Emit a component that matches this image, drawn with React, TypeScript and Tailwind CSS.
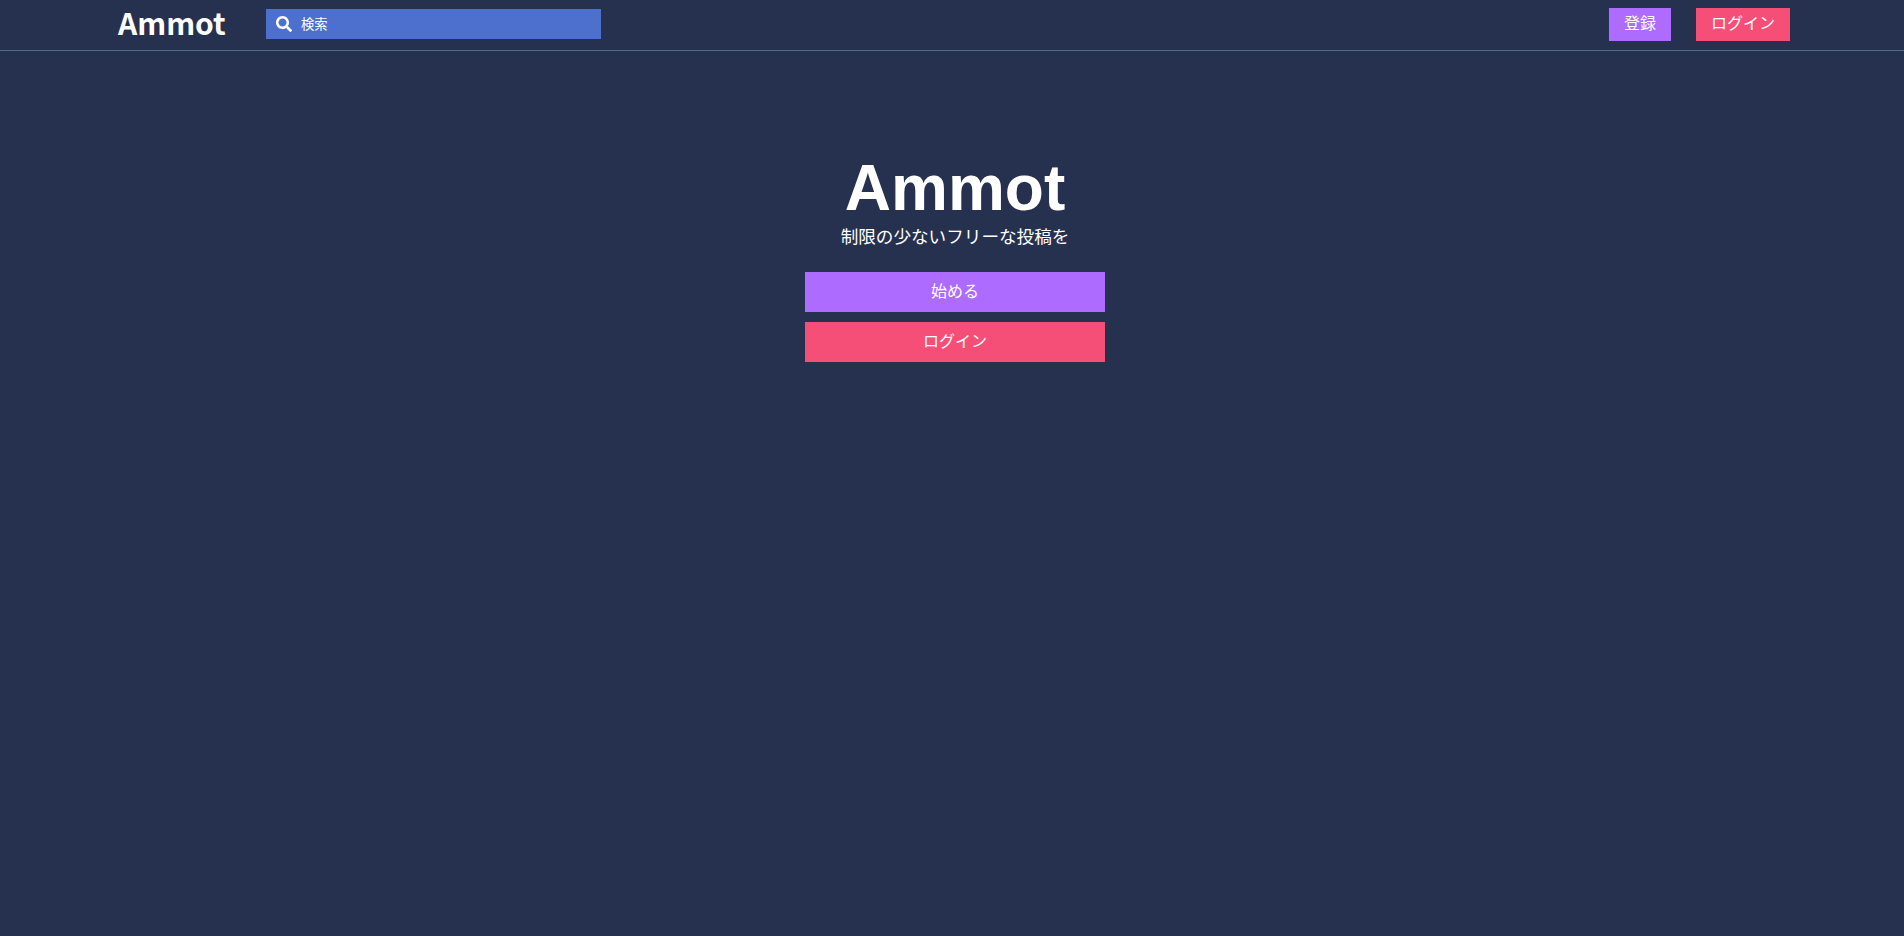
import { FaSearch } from "react-icons/fa";

const sans = "font-['Liberation_Sans','Noto_Sans_CJK_JP',sans-serif]";

export default function App() {
  return (
    <div className={`min-h-[936px] bg-[#263150] text-white ${sans}`}>
      <header className="flex h-[51px] items-center border-b border-[#56688f] pb-[2px] pl-[117px] pr-[114px]">
        <span className="mb-[4px] ml-[1px] w-[148px] font-['Noto_Sans_CJK_JP',sans-serif] text-[30px] font-bold leading-none">
          Ammot
        </span>
        <div className="flex h-[30px] w-[335px] items-center gap-[9px] bg-[#4d70ce] pl-[10px] text-[13.33px]">
          <FaSearch size={16} />
          <span className="pt-[1px]">検索</span>
        </div>
        <div className="ml-auto flex gap-[25px] text-base">
          <a className="flex h-[33px] w-[62px] items-center justify-center bg-[#ad6bff]">登録</a>
          <a className="flex h-[33px] w-[94px] items-center justify-center bg-[#f54f78]">ログイン</a>
        </div>
      </header>

      <main className="flex flex-col items-center pl-[6px] pt-[100px]">
        <h1 className="text-[64px] font-bold leading-[74px]">Ammot</h1>
        <p className="text-[17.6px] leading-[24px]">制限の少ないフリーな投稿を</p>
        <a className="mt-[23px] flex h-10 w-[300px] items-center justify-center bg-[#ad6bff] text-base">始める</a>
        <a className="mt-[10px] flex h-10 w-[300px] items-center justify-center bg-[#f54f78] text-base">ログイン</a>
      </main>
    </div>
  );
}
